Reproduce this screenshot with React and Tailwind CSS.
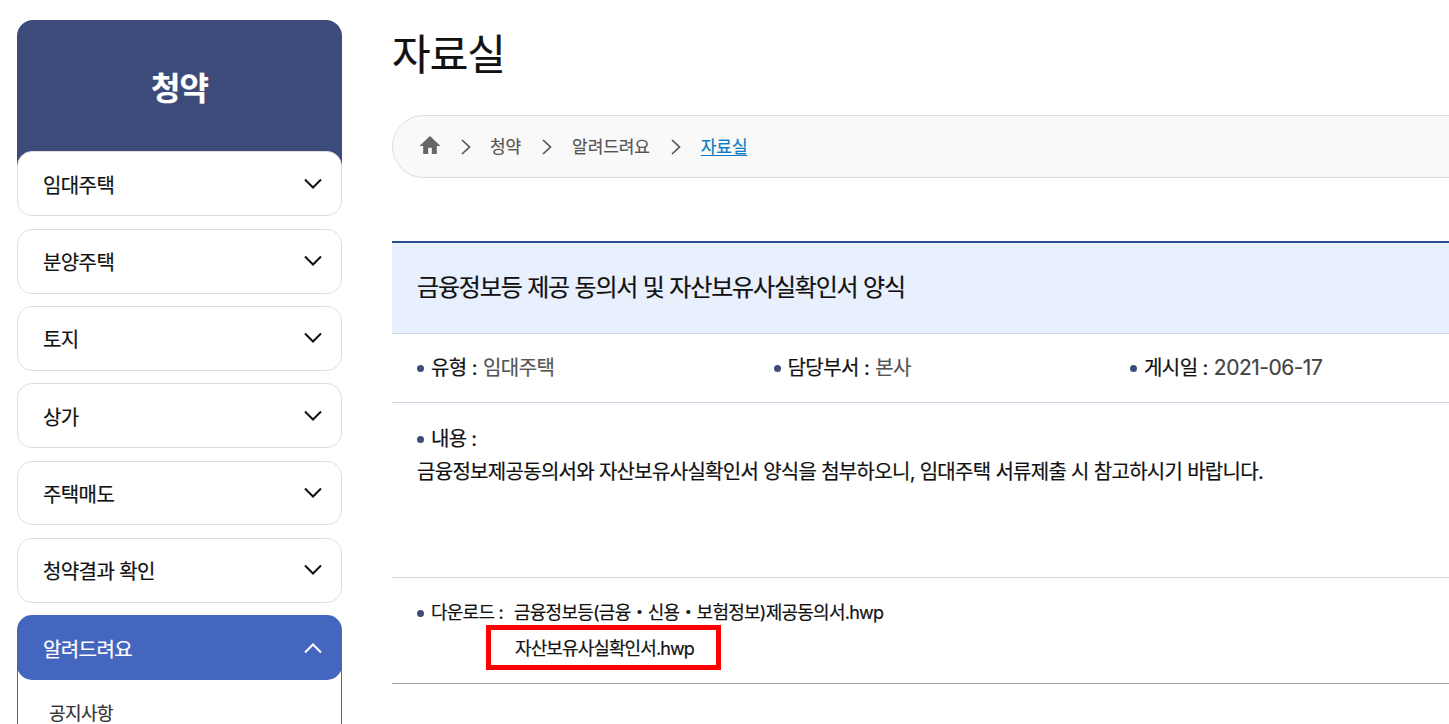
import React from "react";

const menu = ["임대주택", "분양주택", "토지", "상가", "주택매도", "청약결과 확인"];
const font = "font-['Inter','Noto_Sans_CJK_KR','Noto_Sans',sans-serif]";

function Chevron({ up, color }) {
  return (
    <svg width="20" height="12" viewBox="0 0 20 12" fill="none" stroke={color} strokeWidth="2" className="shrink-0">
      <path d={up ? "M2 10.5 L10 2.5 L18 10.5" : "M2 1.5 L10 9.5 L18 1.5"} />
    </svg>
  );
}

function Sep() {
  return (
    <svg width="12" height="16" viewBox="0 0 12 16" fill="none" stroke="#555" strokeWidth="1.7" className="shrink-0">
      <path d="M2 1 L9.5 8 L2 15" />
    </svg>
  );
}

function Dot() {
  return <span className="mr-[7px] inline-block size-[7px] shrink-0 rounded-full bg-[#3d4b7a]" />;
}

export default function App() {
  return (
    <div className={`${font} flex h-[724px] w-[1449px] overflow-hidden bg-white tracking-[-0.6px] text-[#111] [-webkit-text-stroke:0.2px]`}>
      <aside className="ml-[17px] mt-[20px] w-[325px] shrink-0">
        <div className="flex h-[150px] items-start justify-center rounded-t-[16px] bg-[#3d4b7a] pt-[47px] text-[32px] font-bold leading-[44px] text-white tracking-[-1px]">
          청약
        </div>
        <div className="relative -mt-[18.6px] flex flex-col gap-[12.5px] bg-transparent">
          {menu.map((m) => (
            <div key={m} className="flex h-[64.8px] items-center justify-between rounded-[15px] border border-[#dedede] bg-white pl-[25px] pr-[18px] text-[20px]">
              <span className="pt-[4px]">{m}</span>
              <Chevron color="#111" />
            </div>
          ))}
          <div>
            <div className="flex h-[65px] items-center justify-between rounded-[15px] bg-[#4466bf] pl-[26px] pr-[19px] text-[20px] text-white">
              <span className="pt-[4px]">알려드려요</span>
              <Chevron up color="#fff" />
            </div>
            <div className="-mt-[15px] h-[60px] border-x border-[#4466bf] pl-[31px] pt-[36px] text-[18px] leading-[26px] text-[#333]">
              공지사항
            </div>
          </div>
        </div>
      </aside>

      <main className="ml-[50px] w-[1100px] shrink-0">
        <h1 className="mt-[25px] text-[42px] font-normal leading-[60px] tracking-[-1px] text-[#111]">자료실</h1>

        <nav className="mt-[30px] flex h-[63px] items-center rounded-l-[32px] border border-[#dedede] bg-[#f9f9f9] pl-[26px] text-[17px] tracking-[-0.1px] text-[#555]">
          <svg width="22" height="20" viewBox="0 0 24 22" fill="#666" className="-mt-[3px] shrink-0">
            <path d="M12 1 L0.5 12 H4.5 V21 H10 V14 H14 V21 H19.5 V12 H23.5 Z" />
          </svg>
          <span className="ml-[19px]"><Sep /></span>
          <span className="ml-[18px] pt-[2px]">청약</span>
          <span className="ml-[20px]"><Sep /></span>
          <span className="ml-[19px] pt-[2px]">알려드려요</span>
          <span className="ml-[20px]"><Sep /></span>
          <a className="ml-[19px] pt-[2px] text-[#0b7cc4] underline underline-offset-2">자료실</a>
        </nav>

        <section className="mt-[63px] border-t-2 border-[#2b4a94]">
          <div className="flex h-[91px] items-center border-b border-[#c9d6e6] bg-[#e9f0fd] pb-[1px] pl-[25px] text-[24px] font-normal tracking-[-1.17px] text-[#111]">
            금융정보등 제공 동의서 및 자산보유사실확인서 양식
          </div>
          <div className="flex h-[69px] items-center border-b border-[#c9d6e6] pl-[25px] text-[20px] tracking-[-0.55px]">
            <div className="flex w-[356.5px] items-center">
              <Dot />
              <span>유형 :</span>
              <span className="-mt-[1px] ml-[6px] text-[#555]">임대주택</span>
            </div>
            <div className="flex w-[356.5px] items-center">
              <Dot />
              <span>담당부서 :</span>
              <span className="-mt-[1px] ml-[6px] text-[#555]">본사</span>
            </div>
            <div className="flex items-center">
              <Dot />
              <span>게시일 :</span>
              <span className="-mt-[1px] ml-[6px] text-[21px] tracking-[-0.5px] text-[#444]">2021-06-17</span>
            </div>
          </div>
          <div className="h-[175px] border-b border-[#d6d6d6] pl-[25px] pt-[20px] text-[20px] leading-[33px] tracking-[-0.7px]">
            <div className="flex items-center"><Dot />내용 :</div>
            <p>금융정보제공동의서와 자산보유사실확인서 양식을 첨부하오니, 임대주택 서류제출 시 참고하시기 바랍니다.</p>
          </div>
          <div className="h-[106px] border-b border-[#a8a8a8] pl-[25px] pt-[20px] text-[18px] leading-[30px] tracking-[-0.75px]">
            <div className="flex items-center">
              <Dot />
              <span>다운로드 :</span>
              <span className="ml-[11px]">금융정보등(금융・신용・보험정보)제공동의서.hwp</span>
            </div>
            <div className="ml-[69px] mt-[-3px] flex h-[45px] w-[235px] items-center border-[5px] border-[#ff0000] pl-[24px] pt-[2px] tracking-[-0.9px]">
              자산보유사실확인서.hwp
            </div>
          </div>
        </section>
      </main>
    </div>
  );
}
